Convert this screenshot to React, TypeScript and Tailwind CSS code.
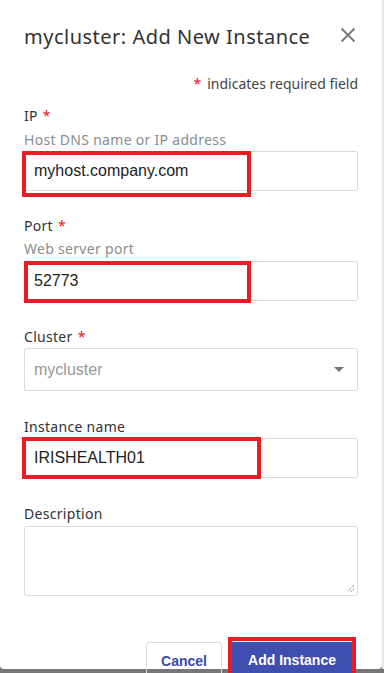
import React from "react";

const Req = () => <span className="text-[#e4141b] ml-[5px] text-[14px]">*</span>;

function Field({ value, red }: { value: string; red: string }) {
  return (
    <div className="relative h-[40px] border border-[#dcdcdc] rounded-[2px] bg-white flex items-center pl-[9px] text-[16px] text-[#222]" style={{ fontFamily: '"Liberation Sans", Arial, sans-serif' }}>
      {value}
      <div className={"absolute border-[4px] border-[#e81c24] " + red} />
    </div>
  );
}

export default function App() {
  return (
    <div className="w-[384px] h-[673px] bg-[#777] relative overflow-hidden" style={{ fontFamily: '"Noto Sans", "Open Sans", sans-serif' }}>
      <div className="absolute left-0 top-0 w-[382px] h-[669px] bg-white rounded-b-[4px]">
        <div className="flex flex-col px-[24px] pt-[22px]">
          <div className="flex items-center justify-between h-[30px]">
            <span className="text-[20px] text-[#333] tracking-[0.5px]">mycluster: Add New Instance</span>
            <svg width="16" height="16" viewBox="0 0 16 16" className="mr-[2px] mt-[-4px]">
              <path d="M1.5 1.5 L14.5 14.5 M14.5 1.5 L1.5 14.5" stroke="#777" strokeWidth="1.8" />
            </svg>
          </div>
          <div className="mt-[22px] h-[20px] flex items-center justify-end text-[14px] text-[#444] leading-[20px]">
            <span className="text-[#e4141b] mr-[6px]">*</span>indicates required field
          </div>

          <div className="mt-[11px] h-[20px] flex items-center text-[14px] text-[#333] tracking-[0.3px]">IP<Req /></div>
          <div className="mt-[4px] h-[20px] flex items-center text-[14px] text-[#8c8c8c] tracking-[0.3px]">Host DNS name or IP address</div>
          <div className="mt-[2px]">
            <Field value="myhost.company.com" red="left-[-3px] top-[-1px] w-[229px] h-[46px]" />
          </div>

          <div className="mt-[24px] h-[20px] flex items-center text-[14px] text-[#333] tracking-[0.3px]">Port<Req /></div>
          <div className="mt-[3px] h-[20px] flex items-center text-[14px] text-[#8c8c8c] tracking-[0.3px]">Web server port</div>
          <div className="mt-[3px]">
            <Field value="52773" red="left-[-1px] top-[-1px] w-[227px] h-[42px]" />
          </div>

          <div className="mt-[25px] h-[20px] flex items-center text-[14px] text-[#333] tracking-[0.3px]">Cluster<Req /></div>
          <div className="mt-[2px] h-[43px] border border-[#dcdcdc] rounded-[2px] flex items-center justify-between pl-[9px] pr-[13px] text-[16px] text-[#999]" style={{ fontFamily: '"Liberation Sans", Arial, sans-serif' }}>
            mycluster
            <svg width="10" height="5" viewBox="0 0 10 5"><path d="M0 0 L10 0 L5 5 Z" fill="#757575" /></svg>
          </div>

          <div className="mt-[25px] h-[20px] flex items-center text-[14px] text-[#333] tracking-[0.3px]">Instance name</div>
          <div className="mt-[2px]">
            <Field value="IRISHEALTH01" red="left-[-3px] top-[-2px] w-[239px] h-[42px]" />
          </div>

          <div className="mt-[25px] h-[20px] flex items-center text-[14px] text-[#333] tracking-[0.3px]">Description</div>
          <div className="mt-[3px] h-[70px] border border-[#dcdcdc] rounded-[2px] relative">
            <svg width="9" height="9" viewBox="0 0 9 9" className="absolute right-[2px] bottom-[2px]">
              <path d="M8 1 L1 8 M8 4.5 L4.5 8" stroke="#666" strokeWidth="1" strokeDasharray="1 1" />
            </svg>
          </div>

          <div className="mt-[46px] flex justify-end gap-[10px] pr-[6px]" style={{ fontFamily: '"Liberation Sans", Arial, sans-serif' }}>
            <div className="w-[76px] h-[40px] border border-[#dcdcdc] rounded-[3px] flex items-start justify-center pt-[8px] text-[14px] font-bold text-[#3949ab]">Cancel</div>
            <div className="relative w-[120px] h-[40px] bg-[#3f4fb0] flex items-start justify-center pt-[8px] text-[14px] font-bold text-white">
              Add Instance
              <div className="absolute left-[-4px] top-[-5px] w-[128px] h-[50px] border-[4px] border-[#e81c24]" />
            </div>
          </div>
        </div>
      </div>
      <div className="absolute left-[382px] top-0 w-[2px] h-[669px] bg-[#e6e6e6]" />
    </div>
  );
}
